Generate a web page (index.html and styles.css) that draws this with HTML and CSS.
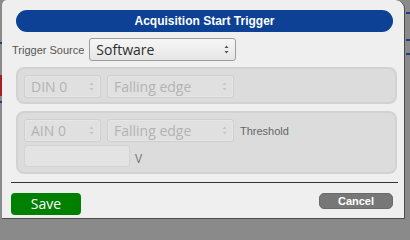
FILE: index.html
```html
<!DOCTYPE html>
<html>
<head>
<meta charset="utf-8">
<link rel="stylesheet" href="styles.css">
</head>
<body>
<div class="backdrop">
  <span class="mark mark-l1"></span>
  <span class="mark mark-red"></span>
  <span class="mark mark-l2"></span>
  <span class="mark mark-r1"></span>
  <span class="mark mark-r2"></span>
  <span class="mark mark-r3"></span>
</div>
<div class="dialog">
  <div class="title">Acquisition Start Trigger</div>
  <div class="row source-row">
    <label class="label">Trigger Source</label>
    <div class="select select-source">
      <span>Software</span>
      <svg class="arrows" width="5" height="9" viewBox="0 0 5 9"><path d="M2.5 0.5 L4.5 3 L0.5 3 Z M0.5 6 L4.5 6 L2.5 8.5 Z"/></svg>
    </div>
  </div>
  <div class="group">
    <div class="row">
      <div class="select disabled select-ch">
        <span>DIN 0</span>
        <svg class="arrows" width="5" height="9" viewBox="0 0 5 9"><path d="M2.5 0.5 L4.5 3 L0.5 3 Z M0.5 6 L4.5 6 L2.5 8.5 Z"/></svg>
      </div>
      <div class="select disabled select-edge">
        <span>Falling edge</span>
        <svg class="arrows" width="5" height="9" viewBox="0 0 5 9"><path d="M2.5 0.5 L4.5 3 L0.5 3 Z M0.5 6 L4.5 6 L2.5 8.5 Z"/></svg>
      </div>
    </div>
  </div>
  <div class="group group-ain">
    <div class="row">
      <div class="select disabled select-ch">
        <span>AIN 0</span>
        <svg class="arrows" width="5" height="9" viewBox="0 0 5 9"><path d="M2.5 0.5 L4.5 3 L0.5 3 Z M0.5 6 L4.5 6 L2.5 8.5 Z"/></svg>
      </div>
      <div class="select disabled select-edge">
        <span>Falling edge</span>
        <svg class="arrows" width="5" height="9" viewBox="0 0 5 9"><path d="M2.5 0.5 L4.5 3 L0.5 3 Z M0.5 6 L4.5 6 L2.5 8.5 Z"/></svg>
      </div>
      <span class="label label-thr">Threshold</span>
    </div>
    <div class="row thr-row">
      <div class="input"></div>
      <span class="unit">V</span>
    </div>
  </div>
  <div class="rule"></div>
  <div class="buttons">
    <button class="btn-save">Save</button>
    <button class="btn-cancel">Cancel</button>
  </div>
</div>
</body>
</html>
```
FILE: styles.css
```css
html, body {
  margin: 0;
  padding: 0;
}
body {
  width: 410px;
  height: 221px;
  background: #8a8a8a;
  overflow: hidden;
  position: relative;
  font-family: "Liberation Sans", Arial, sans-serif;
}
.backdrop .mark {
  position: absolute;
  display: block;
  background: #1c3f86;
}
.mark-l1 { left: 0; top: 42px; width: 2px; height: 2px; }
.mark-red { left: 0; top: 75px; width: 2px; height: 21px; background: #a81e24 !important; }
.mark-l2 { left: 0; top: 101px; width: 2px; height: 2px; }
.mark-r1 { left: 406px; top: 12px; width: 4px; height: 2px; }
.mark-r2 { left: 406px; top: 39px; width: 4px; height: 2px; }
.mark-r3 { left: 406px; top: 53px; width: 4px; height: 2px; }

.dialog {
  position: relative;
  margin-left: 2px;
  width: 403px;
  height: 219px;
  box-sizing: border-box;
  background: #efefef;
  border-right: 1px solid #4c4c4c;
  border-bottom: 1px solid #4c4c4c;
  border-radius: 5px 9px 0 0;
  padding: 10px 0 0 9px;
  display: flex;
  flex-direction: column;
  align-items: flex-start;
}
.title {
  margin-left: 5px;
  width: 377px;
  height: 22px;
  background: #0c4195;
  border-radius: 11px;
  color: #fff;
  font-weight: bold;
  font-size: 12px;
  line-height: 22px;
  text-align: center;
}
.row {
  display: flex;
  align-items: center;
}
.source-row {
  margin-top: 6px;
  height: 23px;
}
.label {
  font-size: 11px;
  color: #555;
}
.source-row .label {
  margin-left: 1px;
  margin-right: 5px;
}
.select {
  box-sizing: border-box;
  height: 23px;
  border: 1px solid #9c9c9c;
  border-radius: 3px;
  background: linear-gradient(#f6f6f6, #e6e6e6);
  display: flex;
  align-items: center;
  justify-content: space-between;
  padding: 0 6px 0 6px;
  font-family: "Open Sans", "Noto Sans", sans-serif;
  font-size: 14px;
  color: #2e2e2e;
}
.select span {
  margin-top: -1px;
}
.arrows {
  fill: #555;
}
.select-source {
  width: 147px;
}
.group {
  margin-top: 6px;
  margin-left: 5px;
  width: 381px;
  box-sizing: border-box;
  background: #dcdcdc;
  border: 2px solid #d2d2d2;
  border-radius: 8px;
  padding: 6px 6px 4px 6px;
}
.group-ain {
  margin-top: 7px;
  padding-bottom: 5px;
}
.select.disabled {
  border-color: #cfcfcf;
  background: #e0e0e0;
  color: #b3b3b3;
  box-shadow: inset 0 0 0 1px #e6e6e6;
}
.select.disabled .arrows {
  fill: #c4c4c4;
}
.select-ch {
  width: 77px;
}
.select-edge {
  width: 127px;
  margin-left: 6px;
}
.label-thr {
  margin-left: 6px;
  color: #666;
}
.thr-row {
  margin-top: 3px;
}
.input {
  width: 106px;
  height: 22px;
  box-sizing: border-box;
  background: #e3e3e3;
  border: 1px solid #d3d3d3;
  border-radius: 3px;
}
.unit {
  margin-left: 5px;
  margin-top: 4px;
  font-family: "Open Sans", "Noto Sans", sans-serif;
  font-size: 12px;
  color: #6e7480;
}
.rule {
  margin-top: 8px;
  width: 387px;
  height: 1px;
  background: #333;
}
.buttons {
  margin-top: 10px;
  width: 382px;
  display: flex;
  justify-content: space-between;
  align-items: flex-start;
}
.btn-save {
  width: 70px;
  height: 22px;
  border: none;
  border-radius: 4px;
  background: #008000;
  color: #fff;
  font-family: "Open Sans", "Noto Sans", sans-serif;
  font-size: 14px;
  padding: 0;
  line-height: 22px;
}
.btn-cancel {
  width: 74px;
  height: 16px;
  border: 1px solid #6a6a6a;
  border-radius: 5px;
  background: #777;
  color: #fff;
  font-family: "Liberation Sans", Arial, sans-serif;
  font-weight: bold;
  font-size: 11px;
  padding: 0;
  line-height: 14px;
}
```
